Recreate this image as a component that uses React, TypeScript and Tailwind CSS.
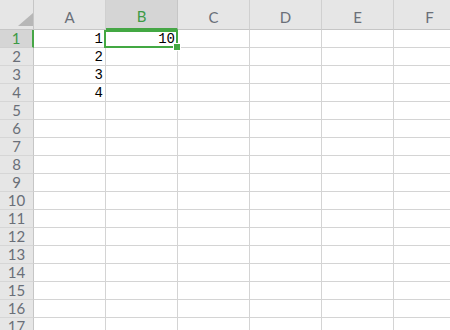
import React from "react";

const cols = ["A", "B", "C", "D", "E", "F"];
const rows = Array.from({ length: 17 }, (_, i) => i + 1);
const values: Record<string, string> = { A1: "1", B1: "10", A2: "2", A3: "3", A4: "4" };

const headFont = { fontFamily: "Lato, 'Noto Sans', sans-serif" };

export default function App() {
  return (
    <div className="relative w-[450px] h-[330px] overflow-hidden bg-white">
      <div className="grid grid-cols-[34px_repeat(6,72px)] grid-rows-[30px_repeat(17,18px)] w-max">
        {/* corner */}
        <div className="relative bg-[#e6e6e6] border-r border-b border-[#c6c6c6]">
          <svg className="absolute left-[18px] top-[13px]" width="15" height="13" viewBox="0 0 15 13">
            <polygon points="15,0 15,13 0,13" fill="#b7b7b7" />
          </svg>
        </div>
        {cols.map((c) =>
          c === "B" ? (
            <div
              key={c}
              className="flex items-center justify-center pt-[4px] bg-[#d5d5d5] border-r border-[#c6c6c6] border-b-2 border-b-[#46a646] text-[#3d9a45] text-[15px] leading-[18px]"
              style={headFont}
            >
              {c}
            </div>
          ) : (
            <div
              key={c}
              className="flex items-center justify-center pt-[4px] bg-[#e6e6e6] border-r border-b border-r-[#d0d0d0] border-b-[#c6c6c6] text-[#6a6f78] text-[15px] leading-[18px]"
              style={headFont}
            >
              {c}
            </div>
          )
        )}
        {rows.map((r) => (
          <React.Fragment key={r}>
            {r === 1 ? (
              <div
                className="flex items-center justify-center bg-[#d5d5d5] border-r-2 border-b border-r-[#46a646] border-b-[#d0d0d0] text-[#3d9a45] text-[15px] leading-[17px]"
                style={headFont}
              >
                {r}
              </div>
            ) : (
              <div
                className="flex items-center justify-center bg-[#e6e6e6] border-r border-b border-r-[#c6c6c6] border-b-[#d6d6d6] text-[#6a6f78] text-[15px] leading-[17px]"
                style={headFont}
              >
                {r}
              </div>
            )}
            {cols.map((c) => (
              <div
                key={c}
                className="flex items-end justify-end pr-[2px] pb-[1px] border-r border-b border-[#d4d4d4] text-black text-[14px] leading-[14px]"
                style={{ fontFamily: "'Liberation Mono', monospace" }}
              >
                {values[c + r] ?? ""}
              </div>
            ))}
          </React.Fragment>
        ))}
      </div>
      {/* selection */}
      <div className="absolute left-[104px] top-[30px] w-[74px] h-[18px] border-2 border-[#43a843]">
        <div className="absolute -right-[4px] -bottom-[4px] w-[6px] h-[6px] bg-[#43a843] outline outline-1 outline-white" />
      </div>
    </div>
  );
}
